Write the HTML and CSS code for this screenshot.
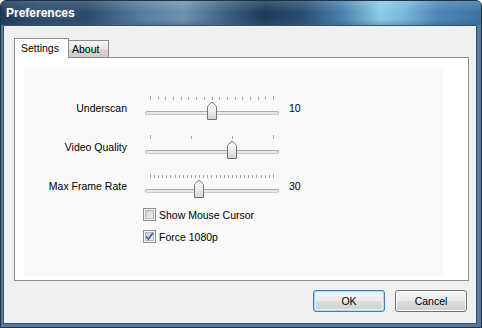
FILE: index.html
```html
<!DOCTYPE html>
<html lang="en">
<head>
    <meta charset="UTF-8">
    <title>Preferences</title>
    <link rel="stylesheet" href="styles.css">
</head>
<body>
    <div class="window">
        <div class="titlebar">
            <span class="title">Preferences</span>
        </div>
        <div class="client">
            <div class="tabs">
                <div class="tab active">Settings</div>
                <div class="tab">About</div>
            </div>
            <div class="tabpage">
                <div class="pane">
                    <div class="rows">
                        <div class="label">Underscan</div>
                        <div class="slider">
                            <div class="ticks">
                                <i></i><i></i><i></i><i></i><i></i><i></i><i></i><i></i><i></i>
                                <i></i><i></i><i></i><i></i><i></i><i></i><i></i><i></i>
                            </div>
                            <div class="track"></div>
                            <svg class="thumb" style="left: 62px" width="10" height="18" viewBox="0 0 10 18">
                                <defs>
                                    <linearGradient id="tg1" x1="0" y1="0" x2="0" y2="1">
                                        <stop offset="0" stop-color="#fcfcfc"/>
                                        <stop offset="0.45" stop-color="#efefef"/>
                                        <stop offset="1" stop-color="#d2d2d2"/>
                                    </linearGradient>
                                </defs>
                                <path d="M0.5 17.5 V5.2 Q0.5 4.4 1.2 3.6 L4 0.9 Q5 0 6 0.9 L8.8 3.6 Q9.5 4.4 9.5 5.2 V17.5 Z" fill="url(#tg1)" stroke="#727272"/>
                            </svg>
                        </div>
                        <div class="value">10</div>

                        <div class="label">Video Quality</div>
                        <div class="slider">
                            <div class="ticks">
                                <i></i><i></i><i></i><i></i>
                            </div>
                            <div class="track"></div>
                            <svg class="thumb" style="left: 82px" width="10" height="18" viewBox="0 0 10 18">
                                <defs>
                                    <linearGradient id="tg2" x1="0" y1="0" x2="0" y2="1">
                                        <stop offset="0" stop-color="#fcfcfc"/>
                                        <stop offset="0.45" stop-color="#efefef"/>
                                        <stop offset="1" stop-color="#d2d2d2"/>
                                    </linearGradient>
                                </defs>
                                <path d="M0.5 17.5 V5.2 Q0.5 4.4 1.2 3.6 L4 0.9 Q5 0 6 0.9 L8.8 3.6 Q9.5 4.4 9.5 5.2 V17.5 Z" fill="url(#tg2)" stroke="#727272"/>
                            </svg>
                        </div>
                        <div class="value"></div>

                        <div class="label">Max Frame Rate</div>
                        <div class="slider">
                            <div class="ticks">
                                <i></i><i></i><i></i><i></i><i></i><i></i><i></i><i></i><i></i><i></i>
                                <i></i><i></i><i></i><i></i><i></i><i></i><i></i><i></i><i></i><i></i>
                                <i></i><i></i><i></i><i></i><i></i><i></i><i></i><i></i><i></i><i></i>
                                <i></i>
                            </div>
                            <div class="track"></div>
                            <svg class="thumb" style="left: 49px" width="10" height="18" viewBox="0 0 10 18">
                                <defs>
                                    <linearGradient id="tg3" x1="0" y1="0" x2="0" y2="1">
                                        <stop offset="0" stop-color="#fcfcfc"/>
                                        <stop offset="0.45" stop-color="#efefef"/>
                                        <stop offset="1" stop-color="#d2d2d2"/>
                                    </linearGradient>
                                </defs>
                                <path d="M0.5 17.5 V5.2 Q0.5 4.4 1.2 3.6 L4 0.9 Q5 0 6 0.9 L8.8 3.6 Q9.5 4.4 9.5 5.2 V17.5 Z" fill="url(#tg3)" stroke="#727272"/>
                            </svg>
                        </div>
                        <div class="value">30</div>
                    </div>

                    <div class="checks">
                        <div class="check">
                            <svg class="box" width="13" height="13" viewBox="0 0 13 13">
                                <defs>
                                    <linearGradient id="cb1" x1="0" y1="0" x2="1" y2="1">
                                        <stop offset="0" stop-color="#c9ccd1"/>
                                        <stop offset="1" stop-color="#f6f6f6"/>
                                    </linearGradient>
                                </defs>
                                <rect x="0.5" y="0.5" width="12" height="12" fill="#f5f5f5" stroke="#8e8f8f"/>
                                <rect x="2.5" y="2.5" width="8" height="8" fill="url(#cb1)" stroke="#b4b8bd"/>
                            </svg>
                            <span>Show Mouse Cursor</span>
                        </div>
                        <div class="check">
                            <svg class="box" width="13" height="13" viewBox="0 0 13 13">
                                <defs>
                                    <linearGradient id="cb2" x1="0" y1="0" x2="1" y2="1">
                                        <stop offset="0" stop-color="#c9ccd1"/>
                                        <stop offset="1" stop-color="#f6f6f6"/>
                                    </linearGradient>
                                </defs>
                                <rect x="0.5" y="0.5" width="12" height="12" fill="#f5f5f5" stroke="#8e8f8f"/>
                                <rect x="2.5" y="2.5" width="8" height="8" fill="url(#cb2)" stroke="#b4b8bd"/>
                                <path d="M3.2 6.4 L5.4 9.2 L9.8 3" fill="none" stroke="#3d5a99" stroke-width="1.6"/>
                            </svg>
                            <span>Force 1080p</span>
                        </div>
                    </div>
                </div>
            </div>
            <div class="buttons">
                <button class="btn default">OK</button>
                <button class="btn">Cancel</button>
            </div>
        </div>
    </div>
</body>
</html>
```

FILE: styles.css
```css
* {
    box-sizing: border-box;
}

body {
    margin: 0;
    font-family: 'Liberation Sans', Arial, sans-serif;
    font-size: 10.5px;
    color: #000;
    background-color: #fff;
}

.window {
    width: 482px;
    height: 328px;
    display: flex;
    flex-direction: column;
    border: 1px solid #1f3347;
    border-radius: 6px 6px 0 0;
    background-color: #557999;
    overflow: hidden;
}

.titlebar {
    height: 24px;
    display: flex;
    align-items: center;
    padding-left: 5px;
    background:
        linear-gradient(180deg, rgba(255, 255, 255, 0.16) 0%, rgba(255, 255, 255, 0) 45%, rgba(0, 0, 0, 0) 75%, rgba(60, 90, 115, 0.35) 100%),
        linear-gradient(90deg, #1e3856 0%, #2a4a6c 8%, #2c4b6c 18%, #5a7fa1 30%, #7090ad 38%, #3d5f80 47%, #1f3a58 55%, #2a4f75 63%, #4b80ab 71%, #8ccbe6 79%, #79b7da 84%, #4c86b6 91%, #3e73a3 100%);
}

.title {
    color: #fff;
    font-weight: bold;
    font-size: 12px;
    text-shadow: 0 0 5px rgba(255, 255, 255, 0.25);
}

.client {
    flex: 1;
    margin: 0 4px 3px 2px;
    border: 1px solid #36526c;
    background-color: #f0f0f0;
    display: flex;
    flex-direction: column;
    padding: 12px 9px 0 10px;
}

/* tabs */

.tabs {
    display: flex;
    align-items: flex-start;
    height: 20px;
    margin-bottom: -1px;
}

.tab {
    height: 17px;
    margin-top: 2px;
    margin-left: -1px;
    width: 41px;
    padding: 2px 0 0 3px;
    border: 1px solid #898c95;
    border-bottom: none;
    background: linear-gradient(180deg, #f3f3f3 0%, #e8e8e8 50%, #d6d6d6 51%, #cdcdcd 100%);
}

.tab.active {
    position: relative;
    z-index: 1;
    height: 20px;
    margin-top: 0;
    margin-left: 0;
    width: 55px;
    padding: 3px 0 0 6px;
    background: #fff;
}

.tabpage {
    width: 455px;
    height: 224px;
    border: 1px solid #898c95;
    background-color: #fff;
    padding: 9px 25px 4px 9px;
}

.pane {
    height: 100%;
    background-color: #f9f9f9;
    padding-top: 29px;
}

/* slider rows */

.rows {
    display: grid;
    grid-template-columns: 121px 144px auto;
    grid-auto-rows: 24px;
    row-gap: 15px;
    align-items: center;
}

.label {
    text-align: right;
    padding-right: 18px;
}

.slider {
    position: relative;
    width: 134px;
    height: 24px;
}

.ticks {
    position: absolute;
    top: 0;
    left: 5px;
    right: 5px;
    height: 4px;
    display: flex;
    justify-content: space-between;
    align-items: flex-end;
}

.ticks i {
    width: 1px;
    height: 3px;
    background-color: #a6a6a6;
}

.ticks i:first-child,
.ticks i:last-child {
    height: 4px;
}

.track {
    position: absolute;
    top: 15px;
    left: 0;
    right: 0;
    height: 4px;
    border: 1px solid #a9a9a9;
    border-bottom-color: #c9c9c9;
    border-radius: 2px;
    background-color: #e7e8e8;
}

.thumb {
    position: absolute;
    top: 6px;
    display: block;
}

/* checkboxes */

.checks {
    margin-top: 10px;
    padding-left: 119px;
    display: flex;
    flex-direction: column;
    gap: 9px;
}

.check {
    display: flex;
    align-items: center;
    gap: 3px;
    height: 13px;
}

.box {
    display: block;
}

/* buttons */

.buttons {
    display: flex;
    justify-content: flex-end;
    gap: 10px;
    margin-top: 9px;
}

.btn {
    width: 72px;
    height: 22px;
    padding: 0;
    font-family: inherit;
    font-size: 10.5px;
    color: #000;
    border: 1px solid #707070;
    border-radius: 3px;
    background: linear-gradient(180deg, #f2f2f2 0%, #ebebeb 48%, #dddddd 52%, #cfcfcf 100%);
    box-shadow: inset 0 0 0 1px #fbfbfb;
}

.btn.default {
    border-color: #3c7fb1;
    box-shadow: inset 0 0 0 1px #a6def6, inset 0 0 0 2px #e0f3fc;
}
```
